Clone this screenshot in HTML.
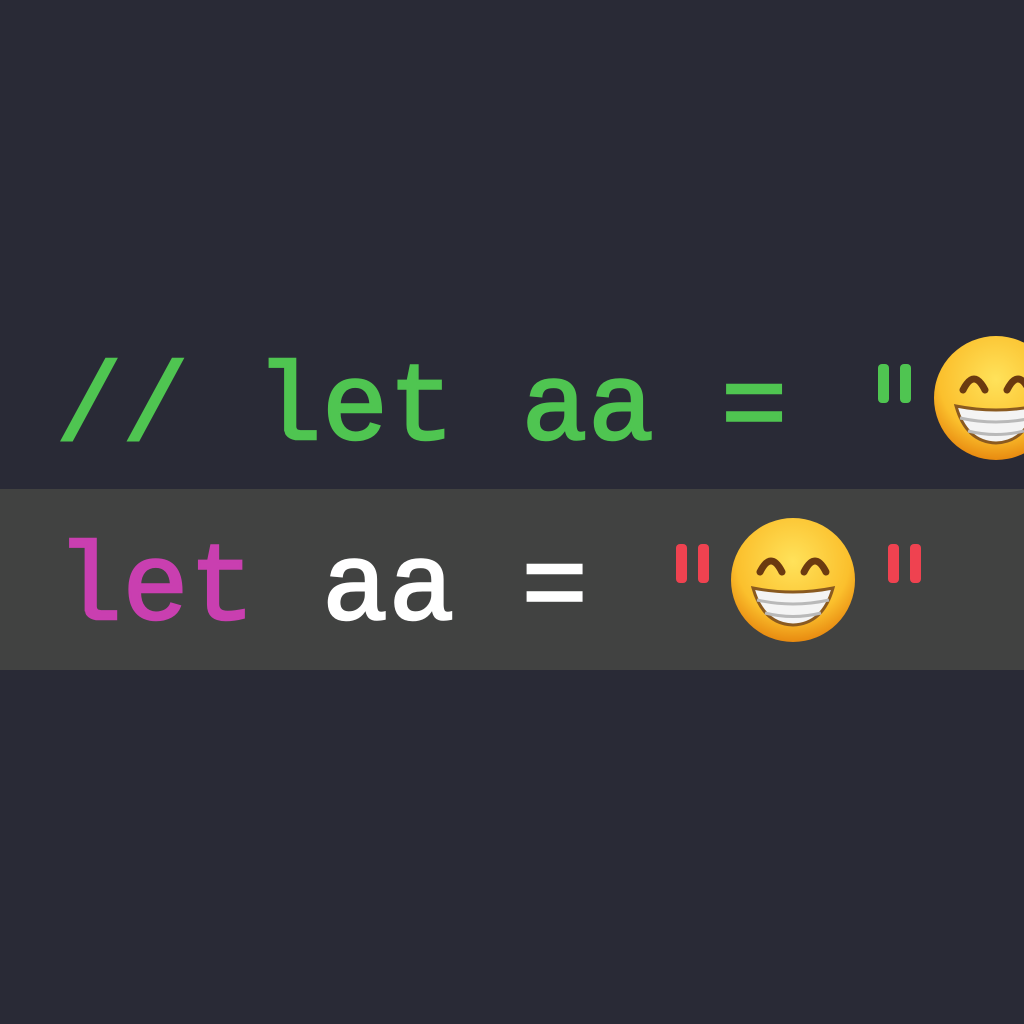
<!DOCTYPE html>
<html><head><meta charset="utf-8"><style>
html,body{margin:0;padding:0;background:#292a36;width:1024px;height:1024px;overflow:hidden;position:relative}
.hl{position:absolute;left:0;top:489px;width:1024px;height:181px;background:#414241}
.ln{position:absolute;left:56px;font-family:"Liberation Mono",monospace;font-size:110px;letter-spacing:0.5px;white-space:pre;line-height:1;-webkit-text-stroke:2.5px currentColor}
.g{color:#4fc551}.p{color:#c93fb0}.w{color:#ffffff}.r{color:#ef4250}
.t{color:transparent;-webkit-text-stroke:0}
svg{position:absolute}
</style></head><body>
<div class="hl"></div>
<div class="ln g" style="top:356px">// let aa = <span class="t">"</span></div>
<div class="ln" style="top:536px"><span class="p">let</span> <span class="w">aa</span> <span class="w">=</span> <span class="t">"</span>  <span class="t">"</span></div>
<svg width="1024" height="1024" viewBox="0 0 1024 1024" style="left:0;top:0">
<defs>
<radialGradient id="f" cx="0.5" cy="0.35" r="0.65">
<stop offset="0" stop-color="#ffe25a"/><stop offset="0.7" stop-color="#fbc02d"/><stop offset="1" stop-color="#e88a10"/>
</radialGradient>
<g id="e">
<circle cx="0" cy="0" r="62" fill="url(#f)"/>
<path d="M-33,-8 Q-22,-30 -11,-8" stroke="#6b3a10" stroke-width="7" fill="none" stroke-linecap="round"/>
<path d="M11,-8 Q22,-30 33,-8" stroke="#6b3a10" stroke-width="7" fill="none" stroke-linecap="round"/>
<path d="M-40,8 Q0,16 40,8 Q30,44 0,45 Q-30,44 -40,8Z" fill="#f4f4f4" stroke="#8a5a20" stroke-width="3"/>
<path d="M-36,20 Q0,28 36,20 M-28,33 Q0,40 28,33" stroke="#b9b9b9" stroke-width="3" fill="none"/>
</g>
</defs>
<g fill="#ef4250">
<rect x="676" y="544" width="11" height="39" rx="4"/><rect x="698" y="544" width="11" height="39" rx="4"/>
<rect x="888" y="544" width="11" height="39" rx="4"/><rect x="910" y="544" width="11" height="39" rx="4"/>
</g>
<g fill="#4fc551">
<rect x="878" y="364" width="11" height="39" rx="4"/><rect x="900" y="364" width="11" height="39" rx="4"/>
</g>
<use href="#e" x="793" y="580"/>
<use href="#e" x="996" y="398"/>
</svg>
</body></html>
